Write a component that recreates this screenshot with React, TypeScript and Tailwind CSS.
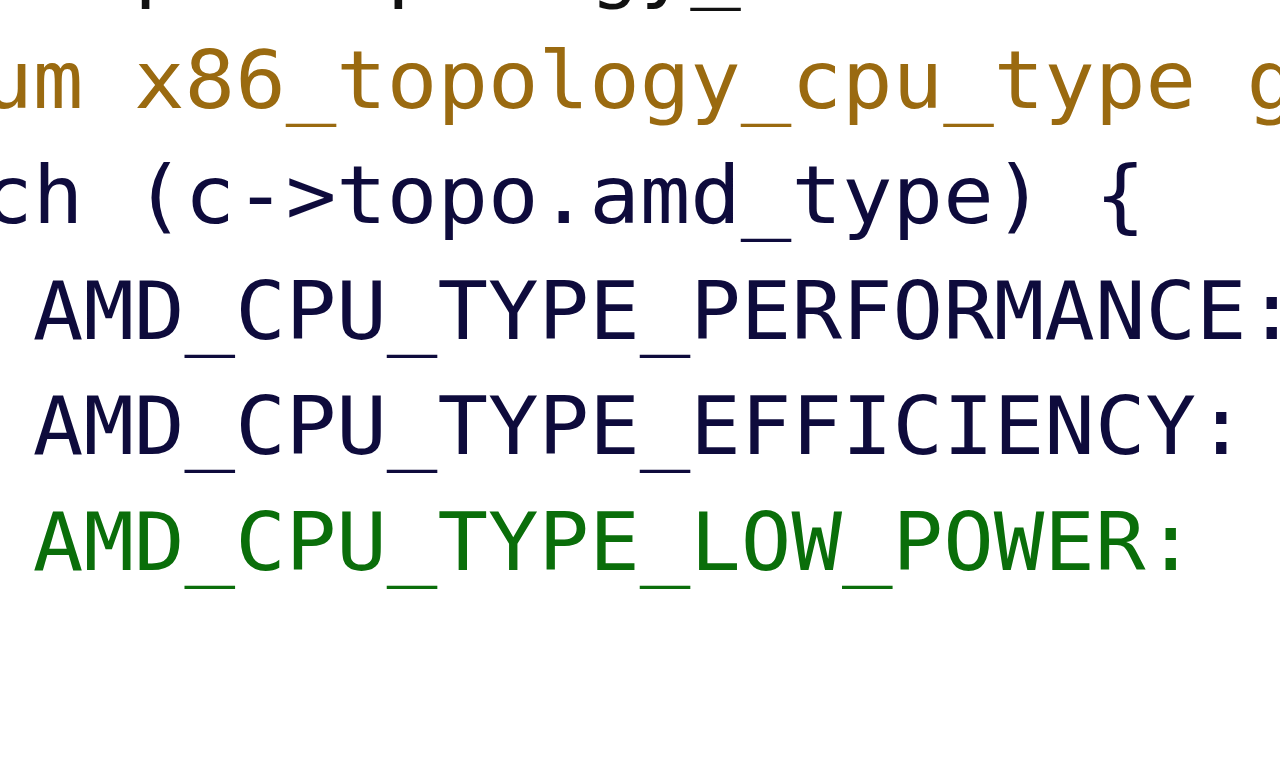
import React from "react";

export default function App() {
  const lines: { text: string; cls: string }[] = [
    { text: "  /* Maps topology_amd to the generic enum */", cls: "text-[#111111]" },
    { text: "  enum x86_topology_cpu_type get_topology_cpu_type(struct cpuinfo_x86 *c)", cls: "text-[#9a6a10]" },
    { text: "switch (c->topo.amd_type) {", cls: "text-[#0e0b3c]" },
    { text: "case AMD_CPU_TYPE_PERFORMANCE:", cls: "text-[#0e0b3c]" },
    { text: "case AMD_CPU_TYPE_EFFICIENCY:", cls: "text-[#0e0b3c]" },
    { text: "case AMD_CPU_TYPE_LOW_POWER:", cls: "text-[#0a6e0a]" },
  ];
  return (
    <div className="w-[1280px] h-[767px] overflow-hidden bg-white">
      <div
        className="ml-[-220px] mt-[-93px] flex flex-col whitespace-pre text-[80px] leading-[115.5px] origin-left scale-x-[1.05]"
        style={{ fontFamily: '"DejaVu Sans Mono", monospace' }}
      >
        {lines.map((l, i) => (
          <div key={i} className={l.cls}>
            {l.text}
          </div>
        ))}
      </div>
    </div>
  );
}
